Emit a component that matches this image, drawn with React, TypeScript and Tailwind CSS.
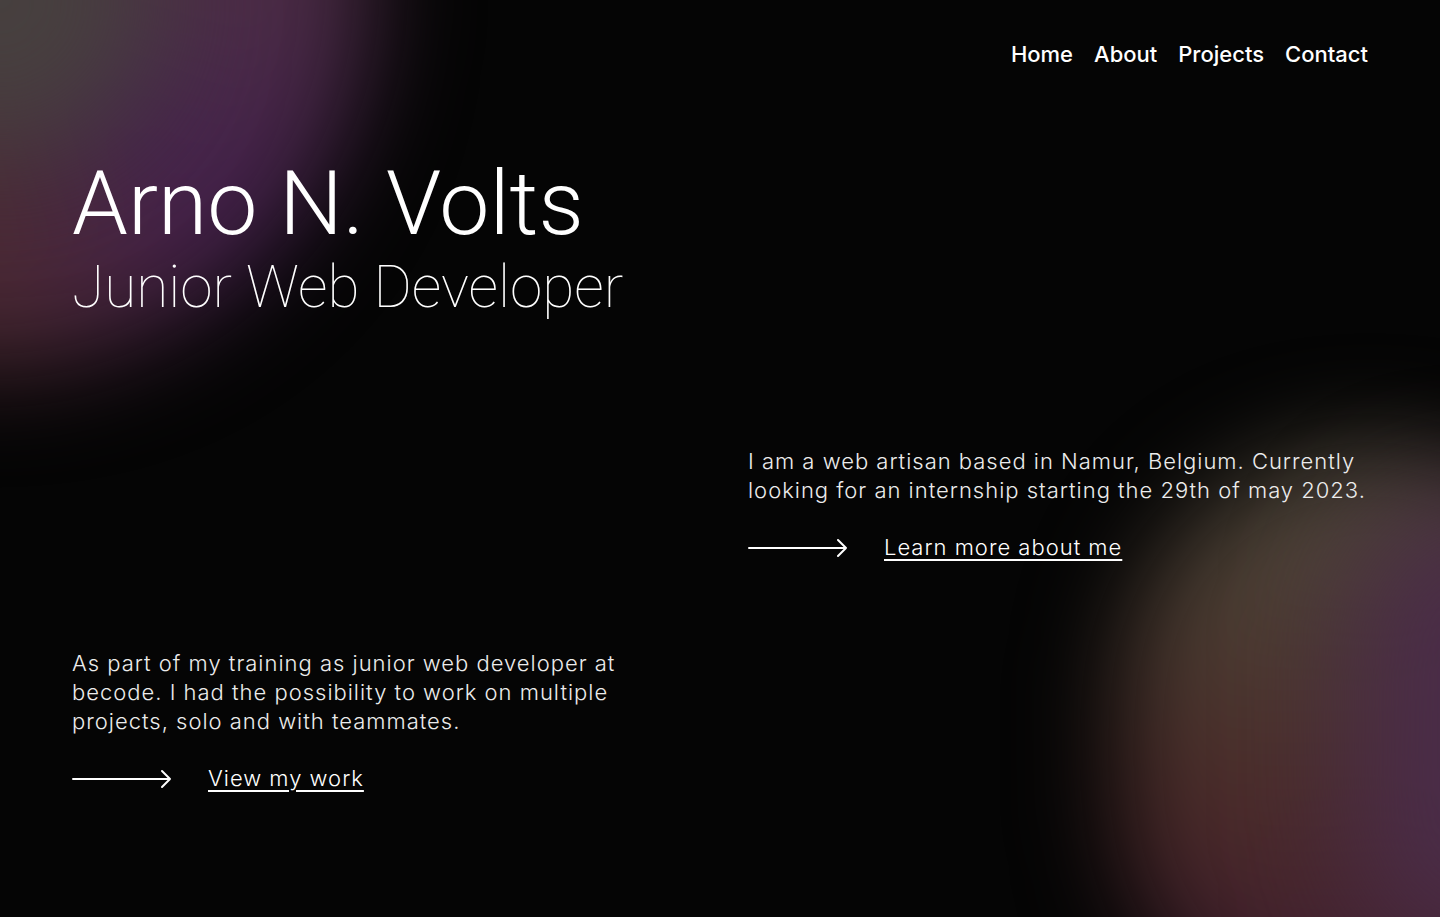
import React from 'react';

function Arrow() {
  return (
    <svg width="100" height="20" viewBox="0 0 100 20" fill="none" className="shrink-0">
      <path d="M1 10H98M90 2L98 10L90 18" stroke="white" strokeWidth="2" strokeLinecap="round" strokeLinejoin="round" />
    </svg>
  );
}

function ArrowLink({ label }: { label: string }) {
  return (
    <a href="#" className="mt-7 flex items-center gap-9 text-white">
      <Arrow />
      <span className="underline decoration-2 underline-offset-[4px]">{label}</span>
    </a>
  );
}

export default function App() {
  return (
    <div className="relative h-[917px] w-full overflow-hidden bg-[#050505] font-['Inter',sans-serif] text-white">
      {/* glow, top left */}
      <div className="pointer-events-none absolute left-[-390px] top-[-390px] h-[760px] w-[760px] rounded-full bg-[conic-gradient(from_90deg_at_50%_50%,#4b2c46_0deg,#44214c_45deg,#4a2932_90deg,#4a2932_270deg,#4b2c46_360deg)] blur-[50px]" />
      <div className="pointer-events-none absolute left-[-160px] top-[-160px] h-[320px] w-[320px] rounded-full bg-[#47403f] blur-[60px]" />

      {/* glow, bottom right */}
      <div className="pointer-events-none absolute left-[1120px] top-[450px] h-[600px] w-[500px] rounded-full bg-[linear-gradient(180deg,#4d483b_0%,#4b3b31_30%,#4a2a29_60%,#3c1a30_100%)] blur-[50px]" />
      <div className="pointer-events-none absolute left-[1350px] top-[500px] h-[460px] w-[260px] rounded-full bg-[#4a2c48] blur-[60px]" />

      <div className="relative z-10">
        <nav className="flex justify-end gap-[21px] px-[72px] pt-10 text-[22px] leading-7 font-[450]">
          <a href="#">Home</a>
          <a href="#">About</a>
          <a href="#">Projects</a>
          <a href="#">Contact</a>
        </nav>

        <main className="px-[72px]">
          <header className="mt-[91px] font-['Roboto',sans-serif]">
            <h1 className="text-[89.5px] leading-none font-light">Arno N. Volts</h1>
            <h2 className="mt-[9px] text-[58.5px] leading-none font-thin">Junior Web Developer</h2>
          </header>

          <section className="mt-[131px] ml-auto w-[620px] text-[22px] leading-[29px] tracking-[0.045em] font-light">
            <p className="text-[#ececec]">
              I am a web artisan based in Namur, Belgium. Currently looking for an internship starting the 29th of may 2023.
            </p>
            <ArrowLink label="Learn more about me" />
          </section>

          <section className="mt-[87px] w-[620px] text-[22px] leading-[29px] tracking-[0.045em] font-light">
            <p className="text-[#ececec]">
              As part of my training as junior web developer at becode. I had the possibility to work on multiple projects, solo and with teammates.
            </p>
            <ArrowLink label="View my work" />
          </section>
        </main>
      </div>
    </div>
  );
}
